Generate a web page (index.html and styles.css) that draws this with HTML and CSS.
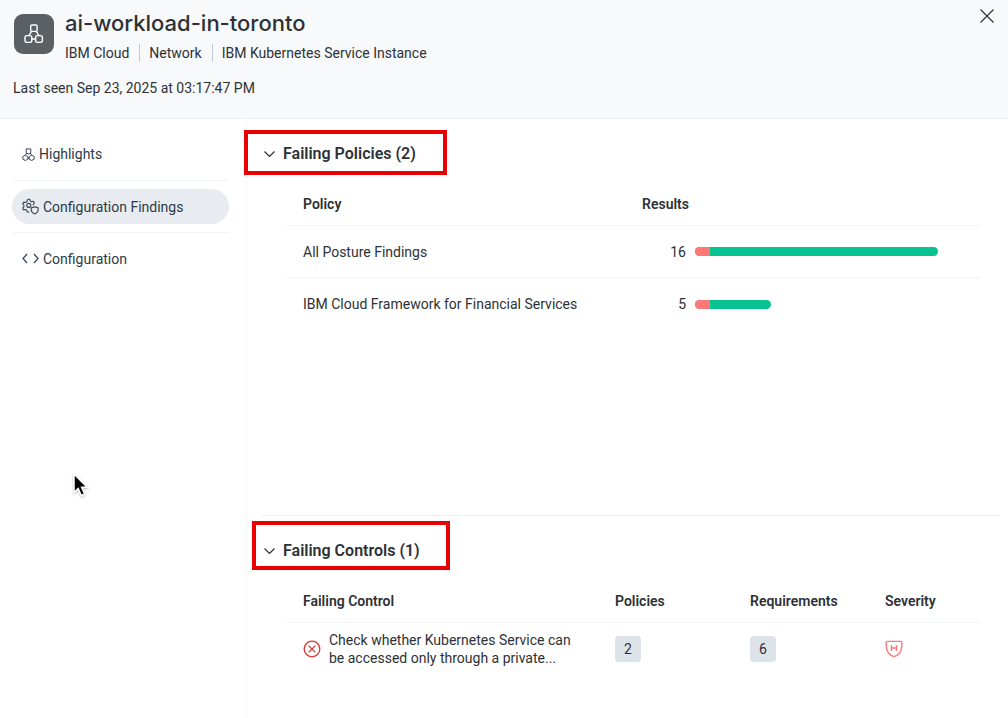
FILE: index.html
```html
<!DOCTYPE html>
<html lang="en">
<head>
<meta charset="utf-8">
<meta name="viewport" content="width=device-width, initial-scale=1">
<title>ai-workload-in-toronto</title>
<link rel="stylesheet" href="styles.css">
</head>
<body class="page">
<header class="header">
  <div class="identity">
    <div class="avatar">
      <svg width="22" height="20" viewBox="0 0 22 20" fill="none" stroke="#fff" stroke-width="1.4" aria-hidden="true">
        <rect x="7.7" y="1" width="6.4" height="6.4" rx="1.2"/>
        <rect x="2" y="11.6" width="6.8" height="6.8" rx="1.8"/>
        <rect x="12.6" y="11.6" width="6.8" height="6.8" rx="1.8"/>
        <path d="M8.6 7.4 5.8 11.6M13.2 7.4 16 11.6M8.8 15h3.8"/>
      </svg>
    </div>
    <div class="titles">
      <h1 class="title">ai-workload-in-toronto</h1>
      <ul class="meta">
        <li class="meta-item">IBM Cloud</li>
        <li class="meta-item">Network</li>
        <li class="meta-item">IBM Kubernetes Service Instance</li>
      </ul>
    </div>
    <button class="close" type="button" aria-label="Close">
      <svg width="14" height="14" viewBox="0 0 14 14" fill="none" stroke="#2d3136" stroke-width="1.2" aria-hidden="true"><path d="M.5.5l13 13M13.5.5l-13 13"/></svg>
    </button>
  </div>
  <p class="seen">Last seen Sep 23, 2025 at 03:17:47 PM</p>
</header>
<div class="layout">
  <nav class="sidebar" aria-label="Sections">
    <ul class="nav">
      <li class="nav-item"><a class="nav-link" href="#highlights">
        <svg width="13" height="13" viewBox="0 0 13 13" fill="none" stroke="#3a4654" stroke-width="1" aria-hidden="true"><path d="M4.2.9h4.6v3.9L6.5 6 4.2 4.8zM3.3 7.2 5.8 8.6v2.6l-2.5 1.3L.8 11.2V8.6zM9.7 7.2l2.5 1.4v2.6l-2.5 1.3-2.5-1.3V8.6zM4.8 5 3.3 7.2M8.2 5l1.5 2.2M5.8 10h1.4"/></svg>
        Highlights</a></li>
      <li class="nav-item"><a class="nav-link nav-link-active" href="#findings" aria-current="page">
        <svg width="17" height="17" viewBox="0 0 17 17" fill="none" stroke="#3a4654" stroke-width="1.1" stroke-linejoin="round" aria-hidden="true"><path d="M7.4 13.6 6.9 14H5.3l-.6-1.8-1.3-.7-1.8.4L.7 10.2l1.2-1.4V7.2L.7 5.8l1-1.7 1.8.4 1.3-.8L5.4 2 6.2 1.2h1.5L8.3 3l1.3.7 1.8-.4 1 1.7-1.2 1.4.1.9"/><circle cx="6.8" cy="7.4" r="2"/><path d="M9.3 9.7c1.5 0 2.4-.3 3.4-.9 1 .6 1.9.9 3.4.9v2.4c0 1.9-1.4 3.1-3.4 3.9-2-.8-3.4-2-3.4-3.9z"/></svg>
        Configuration Findings</a></li>
      <li class="nav-item"><a class="nav-link" href="#configuration">
        <svg width="17" height="11" viewBox="0 0 17 11" fill="none" stroke="#3a4654" stroke-width="1.3" aria-hidden="true"><path d="M5 1 1 5.5 5 10M12 1l4 4.5-4 4.5"/></svg>
        Configuration</a></li>
    </ul>
  </nav>
  <main class="main">
    <section class="panel panel-policies">
      <h2 class="panel-title"><button class="toggle" type="button" aria-expanded="true">
        <svg width="11" height="6" viewBox="0 0 11 6" fill="none" stroke="#2d3136" stroke-width="1.2" aria-hidden="true"><path d="M.5.5l5 5 5-5"/></svg>
        Failing Policies (2)</button></h2>
      <div class="mark mark-policies"></div>
      <table class="table">
        <colgroup><col class="col-policy"><col></colgroup>
        <thead><tr><th scope="col">Policy</th><th scope="col">Results</th></tr></thead>
        <tbody>
          <tr><td>All Posture Findings</td><td><div class="result"><span class="count">16</span><span class="track"><span class="bar" style="width:100%"><span class="bar-fail" style="width:6%"></span></span></span></div></td></tr>
          <tr><td>IBM Cloud Framework for Financial Services</td><td><div class="result"><span class="count">5</span><span class="track"><span class="bar" style="width:31.3%"><span class="bar-fail" style="width:20%"></span></span></span></div></td></tr>
        </tbody>
      </table>
    </section>
    <section class="panel panel-controls">
      <h2 class="panel-title"><button class="toggle" type="button" aria-expanded="true">
        <svg width="11" height="6" viewBox="0 0 11 6" fill="none" stroke="#2d3136" stroke-width="1.2" aria-hidden="true"><path d="M.5.5l5 5 5-5"/></svg>
        Failing Controls (1)</button></h2>
      <div class="mark mark-controls"></div>
      <table class="table">
        <colgroup><col class="col-control"><col class="col-number"><col class="col-number"><col></colgroup>
        <thead><tr><th scope="col">Failing Control</th><th scope="col">Policies</th><th scope="col">Requirements</th><th scope="col">Severity</th></tr></thead>
        <tbody>
          <tr>
            <td class="cell-control"><div class="control">
              <svg class="control-icon" width="18" height="18" viewBox="0 0 18 18" fill="none" stroke="#d93636" stroke-width="1.3" role="img" aria-label="Failed"><circle cx="9" cy="9" r="7.8"/><path d="M5.6 5.6l6.8 6.8M12.4 5.6l-6.8 6.8"/></svg>
              <span>Check whether Kubernetes Service can<br>be accessed only through a private...</span>
            </div></td>
            <td><span class="chip">2</span></td>
            <td><span class="chip">6</span></td>
            <td><svg class="severity" width="18" height="18" viewBox="0 0 18 18" fill="none" stroke="#ff7875" stroke-width="1.4" role="img" aria-label="High"><path d="M2.500 1.400h13c1 0 1.400.6 1.400 1.500 0 3-.1 5.200-.9 7.300-1.100 2.900-3.600 5.300-7 6.500-3.400-1.200-5.900-3.600-7-6.500-.8-2.100-.9-4.300-.9-7.300 0-.9.4-1.500 1.400-1.500z"/><path d="M6.500 5v6M11.500 5v6M6.500 8h5"/></svg></td>
          </tr>
        </tbody>
      </table>
    </section>
  </main>
</div>
<svg class="cursor" width="20" height="26" viewBox="0 0 20 26" aria-hidden="true"><path d="M2 1v18.500l4.200-3.900 3 6.900 3.400-1.500-3-6.700h5.600z" fill="#000" stroke="#fff" stroke-width="1.500"/></svg>
</body>
</html>
```

FILE: styles.css
```css
* { box-sizing: border-box; }

.page {
  margin: 0;
  min-height: 100vh;
  display: flex;
  flex-direction: column;
  background: #fff;
  color: #2d3136;
  font: 14px/18px Roboto, "Liberation Sans", sans-serif;
}

.header {
  padding: 8px 13px 21px;
  background: #f8f9fb;
  border-bottom: 1px solid #edf1f4;
}

.identity { display: flex; gap: 11px; }

.avatar {
  display: flex;
  align-items: center;
  justify-content: center;
  width: 40px;
  height: 40px;
  margin: 6px 0 0 1px;
  border-radius: 9px;
  background: #5a6064;
}

.titles { flex: 1; }

.title {
  margin: 0;
  font-family: Inter, "Liberation Sans", sans-serif;
  font-size: 22px;
  line-height: 30px;
  font-weight: 500;
}

.meta {
  display: flex;
  margin: 6px 0 0;
  padding: 0;
  list-style: none;
}

.meta-item + .meta-item {
  margin-left: 10px;
  padding-left: 9px;
  border-left: 1px solid #c3c9d0;
}

.close {
  display: flex;
  align-self: flex-start;
  padding: 1px;
  border: 0;
  background: none;
}

.seen { margin: 17px 0 0; }

.layout { display: flex; flex: 1; }

.sidebar {
  flex: 0 0 247px;
  padding: 9px 17px 0 12px;
  border-right: 1px solid #f5f6f8;
}

.nav { margin: 0; padding: 0; list-style: none; }

.nav-item { padding: 0 0 8px; }

.nav-item + .nav-item {
  padding-top: 8px;
  border-top: 1px solid #f3f4f6;
}

.nav-link {
  display: flex;
  align-items: center;
  gap: 4px;
  height: 35px;
  padding: 0 10px;
  border-radius: 18px;
  color: #2c3a49;
  text-decoration: none;
}

.nav-item:first-child .nav-link { height: 44px; padding-top: 8px; }
.nav-link-active { background: #e8ecf1; }

.main { flex: 1; padding: 0 8px 0 14px; }

.panel {
  position: relative;
  padding: 24px 20px 0 0;
}

.panel-policies {
  min-height: 397px;
  border-bottom: 1px solid #f0f1f3;
}

.panel-title { margin: 0 0 17px; font-size: 16px; line-height: 22px; }

.toggle {
  display: flex;
  align-items: center;
  gap: 8px;
  padding: 0 0 0 3px;
  border: 0;
  background: none;
  color: inherit;
  font: inherit;
  font-weight: 600;
}

.mark {
  position: absolute;
  border: 4px solid #e90000;
  pointer-events: none;
}

.mark-policies { left: -17px; top: 11px; width: 203px; height: 45px; }
.mark-controls { left: -9px; top: 5px; width: 198px; height: 49px; }

.table {
  width: calc(100% - 24px);
  margin-left: 24px;
  table-layout: fixed;
  border-collapse: separate;
  border-spacing: 0;
}

.col-policy { width: 339px; }
.col-control { width: 312px; }
.col-number { width: 135px; }

.table th {
  height: 44px;
  padding: 0 0 0 18px;
  border-bottom: 1px solid #f3f4f6;
  text-align: left;
  font-weight: 600;
}

.table td { height: 52px; padding: 0 0 0 18px; }
.table tbody tr:not(:last-child) td { border-bottom: 1px solid #f3f4f6; }

.result { display: flex; align-items: center; padding-right: 42px; }
.count { width: 44px; margin-right: 9px; text-align: right; }
.track { flex: 1; }

.bar {
  display: flex;
  height: 9px;
  overflow: hidden;
  border-radius: 5px;
  background: #06c391;
}

.bar-fail { background: #ff7875; }

.control { display: flex; align-items: center; gap: 8px; white-space: nowrap; }
.control-icon { flex: none; }

.chip {
  display: flex;
  align-items: center;
  justify-content: center;
  width: 26px;
  height: 26px;
  border-radius: 4px;
  background: #dee3ea;
}

.severity { display: block; }

.cursor { position: absolute; left: 72px; top: 473px; filter: drop-shadow(0 1px 1px #0004); }
```
